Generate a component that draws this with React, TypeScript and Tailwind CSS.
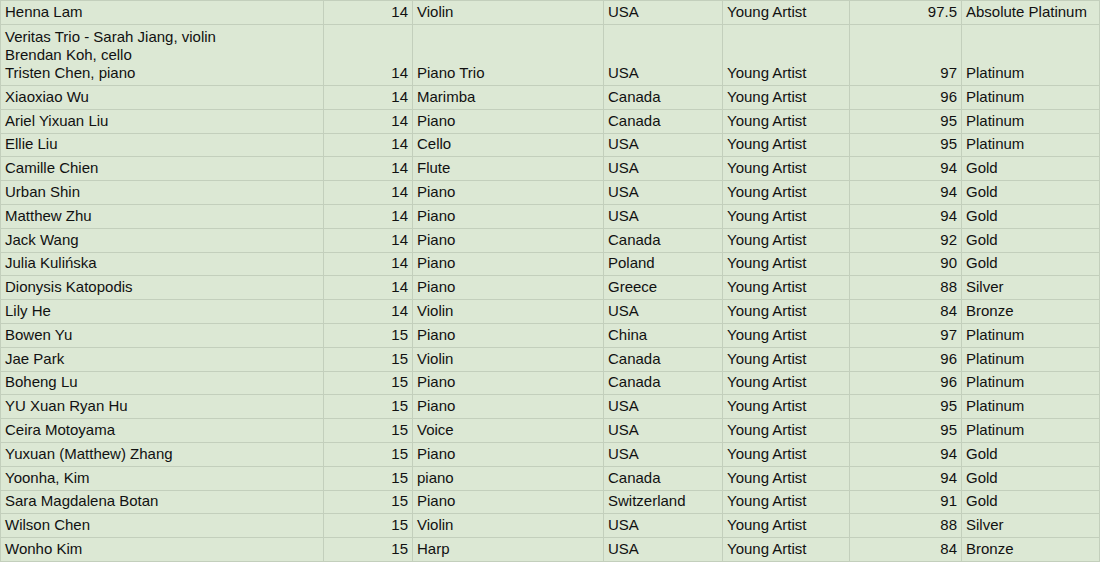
const rows: [string, number, string, string, string, string][] = [
  ["Henna Lam", 14, "Violin", "USA", "97.5", "Absolute Platinum"],
  ["Veritas Trio - Sarah Jiang, violin\nBrendan Koh, cello\nTristen Chen, piano", 14, "Piano Trio", "USA", "97", "Platinum"],
  ["Xiaoxiao Wu", 14, "Marimba", "Canada", "96", "Platinum"],
  ["Ariel Yixuan Liu", 14, "Piano", "Canada", "95", "Platinum"],
  ["Ellie Liu", 14, "Cello", "USA", "95", "Platinum"],
  ["Camille Chien", 14, "Flute", "USA", "94", "Gold"],
  ["Urban Shin", 14, "Piano", "USA", "94", "Gold"],
  ["Matthew Zhu", 14, "Piano", "USA", "94", "Gold"],
  ["Jack Wang", 14, "Piano", "Canada", "92", "Gold"],
  ["Julia Kulińska", 14, "Piano", "Poland", "90", "Gold"],
  ["Dionysis Katopodis", 14, "Piano", "Greece", "88", "Silver"],
  ["Lily He", 14, "Violin", "USA", "84", "Bronze"],
  ["Bowen Yu", 15, "Piano", "China", "97", "Platinum"],
  ["Jae Park", 15, "Violin", "Canada", "96", "Platinum"],
  ["Boheng Lu", 15, "Piano", "Canada", "96", "Platinum"],
  ["YU Xuan Ryan Hu", 15, "Piano", "USA", "95", "Platinum"],
  ["Ceira Motoyama", 15, "Voice", "USA", "95", "Platinum"],
  ["Yuxuan (Matthew) Zhang", 15, "Piano", "USA", "94", "Gold"],
  ["Yoonha, Kim", 15, "piano", "Canada", "94", "Gold"],
  ["Sara Magdalena Botan", 15, "Piano", "Switzerland", "91", "Gold"],
  ["Wilson Chen", 15, "Violin", "USA", "88", "Silver"],
  ["Wonho Kim", 15, "Harp", "USA", "84", "Bronze"],
]

function Cell({ children, right }: { children: React.ReactNode; right?: boolean }) {
  return (
    <div
      className={
        "flex items-end bg-[#dce8d4] pb-[3px] leading-[18px] whitespace-pre-line overflow-hidden " +
        (right ? "justify-end pr-[4px]" : "px-[4px]")
      }
    >
      {children}
    </div>
  )
}

export default function App() {
  return (
    <div className="w-[1100px] h-[562px] overflow-hidden bg-[#c3cfbc] font-['Liberation_Sans',Arial,sans-serif] text-[15px] text-[#111]">
      <div className="grid grid-cols-[322px_88px_190px_118px_126px_111px_137px] grid-rows-[23px_60px_repeat(20,22.8px)] gap-px p-px">
        {rows.map(([name, age, inst, country, score, award], i) => (
          <div key={i} className="contents">
            <Cell>{name}</Cell>
            <Cell right>{age}</Cell>
            <Cell>{inst}</Cell>
            <Cell>{country}</Cell>
            <Cell>Young Artist</Cell>
            <Cell right>{score}</Cell>
            <Cell>{award}</Cell>
          </div>
        ))}
      </div>
    </div>
  )
}
